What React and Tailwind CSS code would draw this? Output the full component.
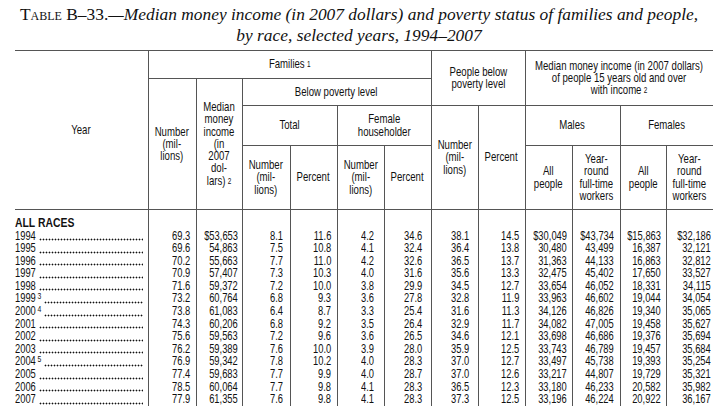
import React from "react";

const rows = [
  ["1994", "", "69.3", "$53,653", "8.1", "11.6", "4.2", "34.6", "38.1", "14.5", "$30,049", "$43,734", "$15,863", "$32,186"],
  ["1995", "", "69.6", "54,863", "7.5", "10.8", "4.1", "32.4", "36.4", "13.8", "30,480", "43,499", "16,387", "32,121"],
  ["1996", "", "70.2", "55,663", "7.7", "11.0", "4.2", "32.6", "36.5", "13.7", "31,363", "44,133", "16,863", "32,812"],
  ["1997", "", "70.9", "57,407", "7.3", "10.3", "4.0", "31.6", "35.6", "13.3", "32,475", "45,402", "17,650", "33,527"],
  ["1998", "", "71.6", "59,372", "7.2", "10.0", "3.8", "29.9", "34.5", "12.7", "33,654", "46,052", "18,331", "34,115"],
  ["1999", "3", "73.2", "60,764", "6.8", "9.3", "3.6", "27.8", "32.8", "11.9", "33,963", "46,602", "19,044", "34,054"],
  ["2000", "4", "73.8", "61,083", "6.4", "8.7", "3.3", "25.4", "31.6", "11.3", "34,126", "46,826", "19,340", "35,065"],
  ["2001", "", "74.3", "60,206", "6.8", "9.2", "3.5", "26.4", "32.9", "11.7", "34,082", "47,005", "19,458", "35,627"],
  ["2002", "", "75.6", "59,563", "7.2", "9.6", "3.6", "26.5", "34.6", "12.1", "33,698", "46,686", "19,376", "35,694"],
  ["2003", "", "76.2", "59,389", "7.6", "10.0", "3.9", "28.0", "35.9", "12.5", "33,743", "46,789", "19,457", "35,684"],
  ["2004", "5", "76.9", "59,342", "7.8", "10.2", "4.0", "28.3", "37.0", "12.7", "33,497", "45,738", "19,393", "35,254"],
  ["2005", "", "77.4", "59,683", "7.7", "9.9", "4.0", "28.7", "37.0", "12.6", "33,217", "44,807", "19,729", "35,321"],
  ["2006", "", "78.5", "60,064", "7.7", "9.8", "4.1", "28.3", "36.5", "12.3", "33,180", "46,233", "20,582", "35,982"],
  ["2007", "", "77.9", "61,355", "7.6", "9.8", "4.1", "28.3", "37.3", "12.5", "33,196", "46,224", "20,922", "36,167"],
];

// right padding for each numeric column, matched to the scan
const pads = ["pr-[5px]", "pr-[4px]", "pr-[6px]", "pr-[5px]", "pr-[9px]", "pr-[8px]", "pr-[8px]", "pr-[5px]", "pr-[5px]", "pr-[6px]", "pr-[5px]", "pr-[2px]"];

const th = "border border-[#555] font-normal align-middle text-center p-0";

const Sup = ({ children }) => <sup className="text-[8.5px] relative -top-[1px] ml-[3px]">{children}</sup>;

// the scan uses a condensed grotesque; squeeze Liberation Sans to match
const Head = ({ children }) => (
  <div className="flex justify-center">
    <span className="whitespace-nowrap scale-x-[0.75]">{children}</span>
  </div>
);

const Num = ({ children }) => (
  <div className="flex justify-end">
    <span className="whitespace-nowrap scale-x-[0.72] origin-right">{children}</span>
  </div>
);

const App = () => {
  return (
    <div className="w-[718px] h-[406px] overflow-hidden bg-white text-[#111]">
      <div className="pt-[4px] h-[50px] text-center [font-family:'Liberation_Serif',serif] text-[17.4px] leading-[21px]">
        <div>
          <span className="[font-variant-caps:small-caps]">Table B–33.</span>
          <span className="italic">—Median money income (in 2007 dollars) and poverty status of families and people,</span>
        </div>
        <div className="italic">by race, selected years, 1994–2007</div>
      </div>

      <table className="ml-[15px] w-[698px] table-fixed border-collapse [font-family:'Liberation_Sans',Arial,sans-serif] text-[12.8px] leading-[12.3px]">
        <colgroup>
          <col className="w-[133px]" />
          <col className="w-[48px]" />
          <col className="w-[46px]" />
          <col className="w-[48px]" />
          <col className="w-[47px]" />
          <col className="w-[47px]" />
          <col className="w-[47px]" />
          <col className="w-[47px]" />
          <col className="w-[47px]" />
          <col className="w-[47px]" />
          <col className="w-[48px]" />
          <col className="w-[46px]" />
          <col className="w-[47px]" />
        </colgroup>
        <thead>
          <tr className="h-[28px]">
            <th rowSpan={4} className={`${th} border-l-0`}><Head>Year</Head></th>
            <th colSpan={6} className={th}><Head>Families<Sup>1</Sup></Head></th>
            <th colSpan={2} rowSpan={2} className={th}><Head>People below<br />poverty level</Head></th>
            <th colSpan={4} rowSpan={2} className={`${th} border-r-0`}>
              <Head>Median money income (in 2007 dollars)<br />of people 15 years old and over<br />with income<Sup>2</Sup></Head>
            </th>
          </tr>
          <tr className="h-[27px]">
            <th rowSpan={3} className={th}><Head>Number<br />(mil-<br />lions)</Head></th>
            <th rowSpan={3} className={th}><Head>Median<br />money<br />income<br />(in<br />2007<br />dol-<br />lars)<Sup>2</Sup></Head></th>
            <th colSpan={4} className={th}><Head>Below poverty level</Head></th>
          </tr>
          <tr className="h-[40px]">
            <th colSpan={2} className={th}><Head>Total</Head></th>
            <th colSpan={2} className={th}><Head>Female<br />householder</Head></th>
            <th rowSpan={2} className={th}><Head>Number<br />(mil-<br />lions)</Head></th>
            <th rowSpan={2} className={th}><Head>Percent</Head></th>
            <th colSpan={2} className={th}><Head>Males</Head></th>
            <th colSpan={2} className={`${th} border-r-0`}><Head>Females</Head></th>
          </tr>
          <tr className="h-[64px]">
            <th className={th}><Head>Number<br />(mil-<br />lions)</Head></th>
            <th className={th}><Head>Percent</Head></th>
            <th className={th}><Head>Number<br />(mil-<br />lions)</Head></th>
            <th className={th}><Head>Percent</Head></th>
            <th className={th}><Head>All<br />people</Head></th>
            <th className={th}><Head>Year-<br />round<br />full-time<br />workers</Head></th>
            <th className={th}><Head>All<br />people</Head></th>
            <th className={`${th} border-r-0`}><Head>Year-<br />round<br />full-time<br />workers</Head></th>
          </tr>
        </thead>
        <tbody className="text-[13px] leading-[12.6px]">
          <tr className="h-[20px]">
            <td className="p-0 align-bottom">
              <span className="inline-block whitespace-nowrap font-bold text-[13px] scale-x-[0.8] origin-left">ALL RACES</span>
            </td>
            {pads.map((p, i) => (
              <td key={i} className="p-0 border-l border-[#555]" />
            ))}
          </tr>
          {rows.map((r) => (
            <tr key={r[0]} className="h-[12.6px]">
              <td className="p-0 pr-[5px]">
                <div className="flex items-baseline h-[12.6px] whitespace-nowrap">
                  <span className="inline-block shrink-0 scale-x-[0.72] origin-left -mr-[8px]">{r[0]}</span>
                  {r[1] && (
                    <span className="text-[8.5px] leading-none relative -top-[3px] ml-[1px] -mr-[1px] scale-x-[0.8] inline-block">{r[1]}</span>
                  )}
                  <span className="self-end ml-[3px] mb-[1px] flex-1 h-[3px] bg-[radial-gradient(circle,#111_0.8px,transparent_1.1px)] bg-[length:3px_3px] bg-repeat-x" />
                </div>
              </td>
              {r.slice(2).map((v, i) => (
                <td key={i} className={`p-0 border-l border-[#555] ${pads[i]}`}>
                  <Num>{v}</Num>
                </td>
              ))}
            </tr>
          ))}
        </tbody>
      </table>
    </div>
  );
};

export default App;
